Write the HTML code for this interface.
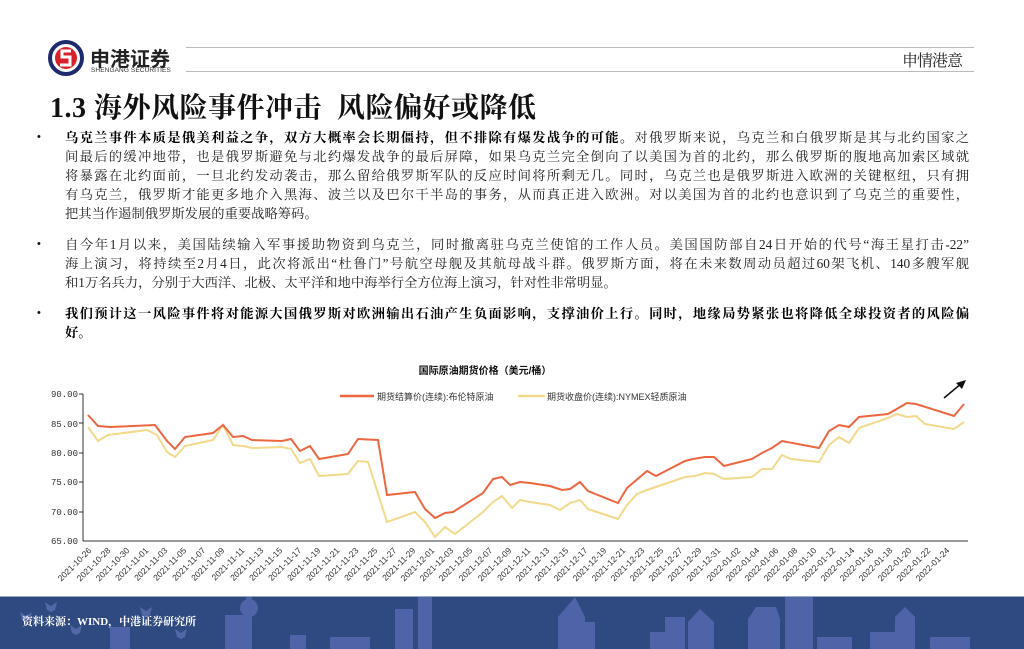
<!DOCTYPE html>
<html><head><meta charset="utf-8"><style>
*{margin:0;padding:0;box-sizing:border-box}
body{width:1024px;height:649px;overflow:hidden;background:#fff;position:relative;font-family:"Liberation Sans","Noto Sans CJK SC",sans-serif;color:#111}
.abs{position:absolute}
.ln{position:absolute;left:186px;width:788px;height:1px;background:#bbb}
.txt{position:absolute;left:65px;width:904px;font-family:"Liberation Serif","Noto Serif CJK SC",serif;font-size:13.3px;line-height:19px;color:#222}
.txt div{white-space:nowrap;text-align:justify;text-align-last:justify;height:19px}
.txt div.l{text-align-last:left}
.b{font-weight:bold;color:#000}
.bul{position:absolute;left:37px;font-size:11px;line-height:19px}
</style></head><body>
<svg class="abs" style="left:48px;top:40px" width="36" height="36" viewBox="0 0 36 36">
<circle cx="18" cy="18" r="16" fill="#fff" stroke="#1d2a6e" stroke-width="4"/>
<circle cx="18" cy="18" r="11" fill="#d8222a"/>
<path d="M23 11 H14 V17 H22 V25 H12" fill="none" stroke="#fff" stroke-width="3"/>
</svg>
<div class="abs" style="left:90px;top:43px;font-size:20px;font-weight:bold;color:#222">申港证券</div>
<div class="abs" style="left:91px;top:67px;font-size:6.5px;color:#333;letter-spacing:0.1px">SHENGANG SECURITIES</div>
<div class="ln" style="top:47px"></div>
<div class="ln" style="top:71px"></div>
<div class="abs" style="left:902px;top:48px;font-size:16px;color:#222;font-family:'Noto Serif CJK SC',serif;letter-spacing:-1px">申情港意</div>
<div class="abs" style="left:50px;top:86px;font-size:28px;font-weight:bold;color:#111;font-family:'Liberation Serif','Noto Serif CJK SC',serif;letter-spacing:0.5px">1.3&nbsp;海外风险事件冲击&nbsp;&nbsp;风险偏好或降低</div>
<div class="bul" style="top:128px">•</div>
<div class="txt" style="top:128px">
<div><span class="b">乌克兰事件本质是俄美利益之争，双方大概率会长期僵持，但不排除有爆发战争的可能。</span>对俄罗斯来说，乌克兰和白俄罗斯是其与北约国家之</div>
<div>间最后的缓冲地带，也是俄罗斯避免与北约爆发战争的最后屏障，如果乌克兰完全倒向了以美国为首的北约，那么俄罗斯的腹地高加索区域就</div>
<div>将暴露在北约面前，一旦北约发动袭击，那么留给俄罗斯军队的反应时间将所剩无几。同时，乌克兰也是俄罗斯进入欧洲的关键枢纽，只有拥</div>
<div>有乌克兰，俄罗斯才能更多地介入黑海、波兰以及巴尔干半岛的事务，从而真正进入欧洲。对以美国为首的北约也意识到了乌克兰的重要性，</div>
<div class="l">把其当作遏制俄罗斯发展的重要战略筹码。</div>
</div>
<div class="bul" style="top:235px">•</div>
<div class="txt" style="top:235px">
<div>自今年1月以来，美国陆续输入军事援助物资到乌克兰，同时撤离驻乌克兰使馆的工作人员。美国国防部自24日开始的代号“海王星打击-22”</div>
<div>海上演习，将持续至2月4日，此次将派出“杜鲁门”号航空母舰及其航母战斗群。俄罗斯方面，将在未来数周动员超过60架飞机、140多艘军舰</div>
<div class="l">和1万名兵力，分别于大西洋、北极、太平洋和地中海举行全方位海上演习，针对性非常明显。</div>
</div>
<div class="bul" style="top:304px">•</div>
<div class="txt b" style="top:304px">
<div>我们预计这一风险事件将对能源大国俄罗斯对欧洲输出石油产生负面影响，支撑油价上行。同时，地缘局势紧张也将降低全球投资者的风险偏</div>
<div class="l">好。</div>
</div>
<svg class="abs" style="left:0;top:0" width="1024" height="600" viewBox="0 0 1024 600" font-family="Liberation Sans,Noto Sans CJK SC,sans-serif">
<text x="485" y="374" font-size="10" font-weight="bold" text-anchor="middle" fill="#111">国际原油期货价格（美元/桶）</text>
<line x1="340" y1="396" x2="374" y2="396" stroke="#ec6640" stroke-width="2.5"/>
<text x="377" y="400" font-size="9" fill="#333">期货结算价(连续):布伦特原油</text>
<line x1="518" y1="396" x2="545" y2="396" stroke="#f2d98b" stroke-width="2.5"/>
<text x="547" y="400" font-size="9" fill="#333">期货收盘价(连续):NYMEX轻质原油</text>
<g font-size="9" fill="#333" text-anchor="end" font-family="Liberation Mono,monospace">
<text x="78" y="397">90.00</text><text x="78" y="456">80.00</text><text x="78" y="427">85.00</text><text x="78" y="485">75.00</text><text x="78" y="515">70.00</text><text x="78" y="544">65.00</text>
</g>
<g stroke="#333" stroke-width="1">
<line x1="83" y1="394" x2="83" y2="541"/><line x1="83" y1="541" x2="968" y2="541"/>
<line x1="79" y1="394" x2="83" y2="394"/><line x1="79" y1="423" x2="83" y2="423"/><line x1="79" y1="453" x2="83" y2="453"/><line x1="79" y1="482" x2="83" y2="482"/><line x1="79" y1="512" x2="83" y2="512"/>
</g>
<polyline fill="none" stroke="#f2d98b" stroke-width="2" points="88,427 98,441 108,435 147,430 157,435 167,452 175,457 185,446 213,440 223,425 233,445 243,446 253,448 282,447 291,449 300,463 310,459 319,476 348,474 358,461 368,462 387,522 415,512 425,522 435,537 445,527 455,534 483,512 493,502 502,496 512,508 520,500 530,502 550,505 560,510 570,503 580,500 588,509 618,519 627,505 637,494 647,490 685,477 695,476 705,473 714,474 724,479 752,477 762,469 772,469 782,455 791,459 819,462 829,445 839,437 849,443 859,428 888,418 897,414 907,417 916,416 925,424 954,429 964,422"/>
<polyline fill="none" stroke="#ec6640" stroke-width="2" points="88,415 98,426 110,427 155,425 167,441 175,449 185,437 213,433 223,425 233,437 243,436 252,440 282,441 291,439 300,451 310,446 319,459 348,454 358,439 378,440 387,495 415,492 425,509 435,518 445,513 453,512 483,493 493,479 502,477 510,485 520,482 530,483 550,486 562,490 570,489 580,482 588,491 618,503 627,488 647,471 656,476 685,461 693,459 705,457 714,457 724,466 752,459 762,453 772,448 782,441 819,448 829,431 839,425 849,427 859,417 888,414 907,403 916,404 954,416 964,404"/>
<line x1="944" y1="398" x2="962" y2="383" stroke="#111" stroke-width="1.5"/>
<path d="M966 380 L956 383 L962 389 Z" fill="#111"/>
<g font-size="8.5" fill="#333" text-anchor="end">
<text transform="translate(92,551) rotate(-45)">2021-10-26</text>
<text transform="translate(111,551) rotate(-45)">2021-10-28</text>
<text transform="translate(130,551) rotate(-45)">2021-10-30</text>
<text transform="translate(149,551) rotate(-45)">2021-11-01</text>
<text transform="translate(168,551) rotate(-45)">2021-11-03</text>
<text transform="translate(187,551) rotate(-45)">2021-11-05</text>
<text transform="translate(206,551) rotate(-45)">2021-11-07</text>
<text transform="translate(225,551) rotate(-45)">2021-11-09</text>
<text transform="translate(245,551) rotate(-45)">2021-11-11</text>
<text transform="translate(264,551) rotate(-45)">2021-11-13</text>
<text transform="translate(283,551) rotate(-45)">2021-11-15</text>
<text transform="translate(302,551) rotate(-45)">2021-11-17</text>
<text transform="translate(321,551) rotate(-45)">2021-11-19</text>
<text transform="translate(340,551) rotate(-45)">2021-11-21</text>
<text transform="translate(359,551) rotate(-45)">2021-11-23</text>
<text transform="translate(378,551) rotate(-45)">2021-11-25</text>
<text transform="translate(397,551) rotate(-45)">2021-11-27</text>
<text transform="translate(416,551) rotate(-45)">2021-11-29</text>
<text transform="translate(435,551) rotate(-45)">2021-12-01</text>
<text transform="translate(454,551) rotate(-45)">2021-12-03</text>
<text transform="translate(473,551) rotate(-45)">2021-12-05</text>
<text transform="translate(493,551) rotate(-45)">2021-12-07</text>
<text transform="translate(512,551) rotate(-45)">2021-12-09</text>
<text transform="translate(531,551) rotate(-45)">2021-12-11</text>
<text transform="translate(550,551) rotate(-45)">2021-12-13</text>
<text transform="translate(569,551) rotate(-45)">2021-12-15</text>
<text transform="translate(588,551) rotate(-45)">2021-12-17</text>
<text transform="translate(607,551) rotate(-45)">2021-12-19</text>
<text transform="translate(626,551) rotate(-45)">2021-12-21</text>
<text transform="translate(645,551) rotate(-45)">2021-12-23</text>
<text transform="translate(664,551) rotate(-45)">2021-12-25</text>
<text transform="translate(683,551) rotate(-45)">2021-12-27</text>
<text transform="translate(702,551) rotate(-45)">2021-12-29</text>
<text transform="translate(721,551) rotate(-45)">2021-12-31</text>
<text transform="translate(741,551) rotate(-45)">2022-01-02</text>
<text transform="translate(760,551) rotate(-45)">2022-01-04</text>
<text transform="translate(779,551) rotate(-45)">2022-01-06</text>
<text transform="translate(798,551) rotate(-45)">2022-01-08</text>
<text transform="translate(817,551) rotate(-45)">2022-01-10</text>
<text transform="translate(836,551) rotate(-45)">2022-01-12</text>
<text transform="translate(855,551) rotate(-45)">2022-01-14</text>
<text transform="translate(874,551) rotate(-45)">2022-01-16</text>
<text transform="translate(893,551) rotate(-45)">2022-01-18</text>
<text transform="translate(912,551) rotate(-45)">2022-01-20</text>
<text transform="translate(931,551) rotate(-45)">2022-01-22</text>
<text transform="translate(950,551) rotate(-45)">2022-01-24</text>
</g>
</svg>
<div class="abs" style="left:0;top:596px;width:1024px;height:1px;background:#9aa8c8"></div>
<svg class="abs" style="left:0;top:597px" width="1024" height="52" viewBox="0 0 1024 52">
<rect width="1024" height="52" fill="#2f4a80"/>
<g fill="#4f63a8">
<rect x="110" y="30" width="20" height="22"/><rect x="225" y="18" width="24" height="34"/><rect x="240" y="30" width="12" height="22"/>
<circle cx="249" cy="11" r="9"/><rect x="246" y="0" width="6" height="52"/>
<rect x="290" y="38" width="16" height="14"/><rect x="330" y="40" width="40" height="12"/>
<rect x="395" y="12" width="18" height="40"/><rect x="418" y="0" width="14" height="52"/>
<path d="M558 52 V20 L575 0 L585 20 V52 Z"/><rect x="583" y="25" width="12" height="27"/>
<rect x="650" y="35" width="30" height="17"/><rect x="665" y="20" width="20" height="32"/><path d="M688 52 V25 L700 12 L714 25 V52 Z"/>
<path d="M748 52 V22 L756 10 L776 10 L780 22 V52 Z"/><rect x="785" y="0" width="28" height="52"/><rect x="817" y="40" width="35" height="12"/>
<rect x="870" y="35" width="30" height="17"/><path d="M895 52 V20 L905 10 L915 20 V52 Z"/><rect x="930" y="40" width="40" height="12"/>
</g>
<g fill="#6a7cc0" opacity="0.6">
<path d="M20 15 l6 4 l6 -4 l-2 8 l-4 2 l-4 -2 Z"/><path d="M45 5 l6 4 l6 -4 l-2 8 l-4 2 l-4 -2 Z"/><path d="M70 28 l6 4 l6 -4 l-2 8 l-4 2 l-4 -2 Z"/><path d="M140 10 l6 4 l6 -4 l-2 8 l-4 2 l-4 -2 Z"/><path d="M175 32 l6 4 l6 -4 l-2 8 l-4 2 l-4 -2 Z"/>
</g>
<text x="22" y="28" font-size="11" font-weight="bold" fill="#fff" font-family="Liberation Serif,Noto Serif CJK SC,serif">资料来源：WIND，中港证券研究所</text>
</svg>
</body></html>
